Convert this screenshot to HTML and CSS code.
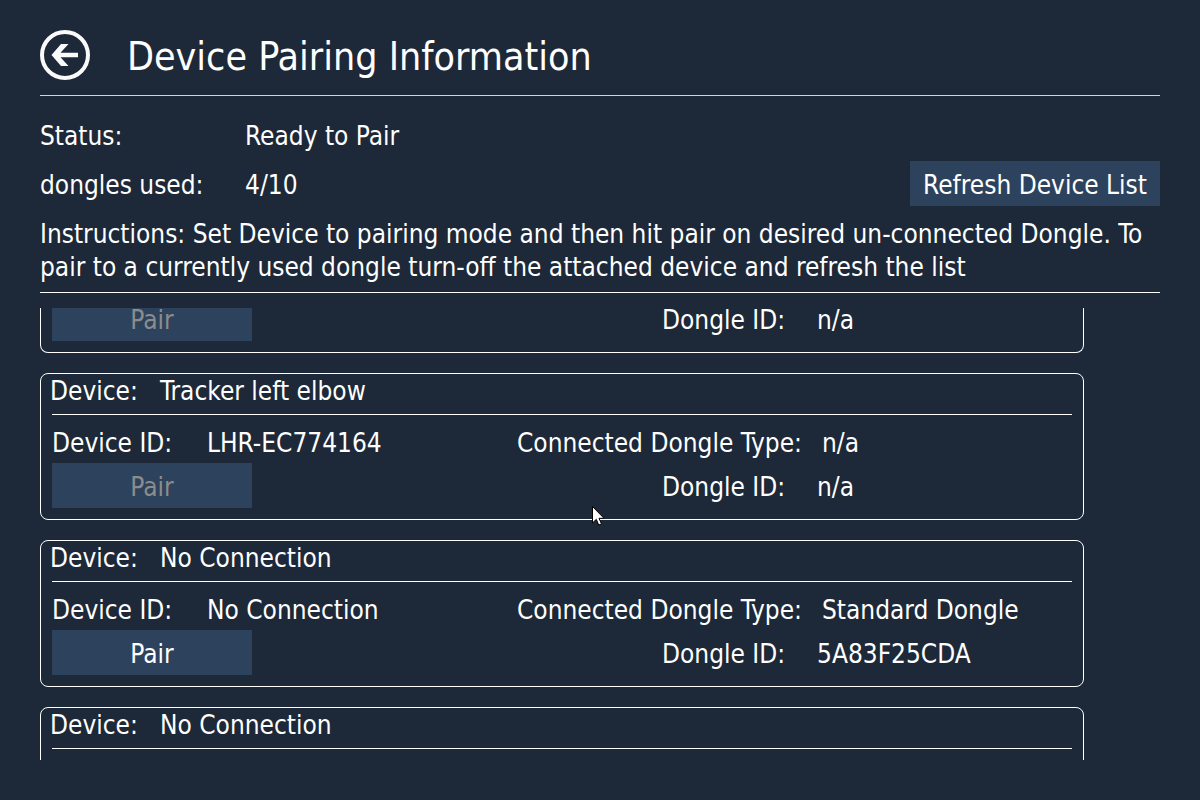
FILE: index.html
```html
<!DOCTYPE html>
<html lang="en">
<head>
<meta charset="utf-8">
<title>Device Pairing Information</title>
<link rel="stylesheet" href="styles.css">
</head>
<body>
<header class="top">
  <button class="back" type="button" aria-label="Back">
    <svg viewBox="0 0 50 50" width="50" height="50" aria-hidden="true">
      <circle cx="25" cy="25" r="23" fill="none" stroke="#fafafa" stroke-width="4"/>
      <path d="M11.500 25 21 14H28.500L20.500 22.800H38V27.300H20.500L28.500 36H21Z" fill="#fafafa"/>
    </svg>
  </button>
  <h1 class="title">Device Pairing Information</h1>
</header>
<section class="summary">
  <div class="info"><span class="info-label">Status:</span><span>Ready to Pair</span></div>
  <div class="info"><span class="info-label">dongles used:</span><span>4/10</span><button class="btn refresh" type="button">Refresh Device List</button></div>
  <p class="instructions">Instructions: Set Device to pairing mode and then hit pair on desired un-connected Dongle. To<br>pair to a currently used dongle turn-off the attached device and refresh the list</p>
</section>
<main class="list">
  <article class="card card-partial">
    <div class="card-foot"><button class="btn pair" type="button" disabled>Pair</button><span class="dongle-label">Dongle ID:</span><span>n/a</span></div>
  </article>
  <article class="card">
    <div class="card-head"><span class="name-label">Device:</span><span>Tracker left elbow</span></div>
    <div class="card-row"><span class="id-label">Device ID:</span><span class="id-value">LHR-EC774164</span><span class="type-label">Connected Dongle Type:</span><span>n/a</span></div>
    <div class="card-foot"><button class="btn pair" type="button" disabled>Pair</button><span class="dongle-label">Dongle ID:</span><span>n/a</span></div>
  </article>
  <article class="card">
    <div class="card-head"><span class="name-label">Device:</span><span>No Connection</span></div>
    <div class="card-row"><span class="id-label">Device ID:</span><span class="id-value">No Connection</span><span class="type-label">Connected Dongle Type:</span><span>Standard Dongle</span></div>
    <div class="card-foot"><button class="btn pair" type="button">Pair</button><span class="dongle-label">Dongle ID:</span><span>5A83F25CDA</span></div>
  </article>
  <article class="card">
    <div class="card-head"><span class="name-label">Device:</span><span>No Connection</span></div>
    <div class="card-row"></div>
  </article>
</main>
<svg class="cursor" viewBox="0 0 12 20" width="12" height="20" aria-hidden="true">
  <path d="M.5.500V17L4.300 13.300 6.700 19 9.500 17.900 7 12.300H12Z" fill="#fff" stroke="#000" stroke-width="1"/>
</svg>
</body>
</html>
```

FILE: styles.css
```css
* { box-sizing: border-box; }
body {
  margin: 0;
  height: 100vh;
  padding: 30px 40px 40px;
  display: flex;
  flex-direction: column;
  overflow: hidden;
  background: #1d2938;
  color: #fff;
  font: 26px/33px "DejaVu Sans Condensed", "DejaVu Sans", sans-serif;
}
.top {
  display: flex;
  align-items: center;
  gap: 37px;
  height: 66px;
  padding-bottom: 15px;
  border-bottom: 1px solid #d2d4d7;
}
.back { padding: 0; border: 0; background: none; height: 50px; }
.title { margin: 0; padding-top: 4px; font-size: 39px; line-height: 46px; font-weight: 400; }
.summary {
  padding: 16px 0 8px;
  border-bottom: 1px solid #fff;
}
.info { display: flex; align-items: center; height: 49px; }
.info-label { width: 205px; }
.instructions { margin: 8px 0 0; white-space: nowrap; }
.btn {
  height: 45px;
  padding: 4px 0 0;
  border: 0;
  background: #2d435d;
  color: #fff;
  font: inherit;
}
.btn:disabled { color: #8c8c8c; }
.refresh { width: 250px; margin-left: auto; align-self: flex-start; }
.list {
  flex: 1;
  min-height: 0;
  margin-top: 15px;
  padding-right: 76px;
  overflow: hidden;
}
.card {
  margin-bottom: 20px;
  padding: 0 11px 11px;
  border: 1px solid #fff;
  border-radius: 8px;
}
/* The list is scrolled part-way into this card. */
.card-partial {
  margin-top: -12px;
  border-top: 0;
  border-radius: 0 0 8px 8px;
}
.card-head {
  display: flex;
  height: 41px;
  padding-top: 1px;
  border-bottom: 1px solid #fff;
}
.name-label { width: 110px; margin-left: -2px; }
.card-row { display: flex; align-items: center; height: 48px; padding-top: 8px; }
.card-foot { display: flex; align-items: center; }
.card-foot span { padding-top: 4px; }
.id-label { width: 155px; }
.id-value { width: 310px; }
.type-label { width: 305px; }
.pair { width: 200px; margin-right: 410px; }
.dongle-label { width: 155px; }
.cursor { position: absolute; left: 592px; top: 506px; }
```
